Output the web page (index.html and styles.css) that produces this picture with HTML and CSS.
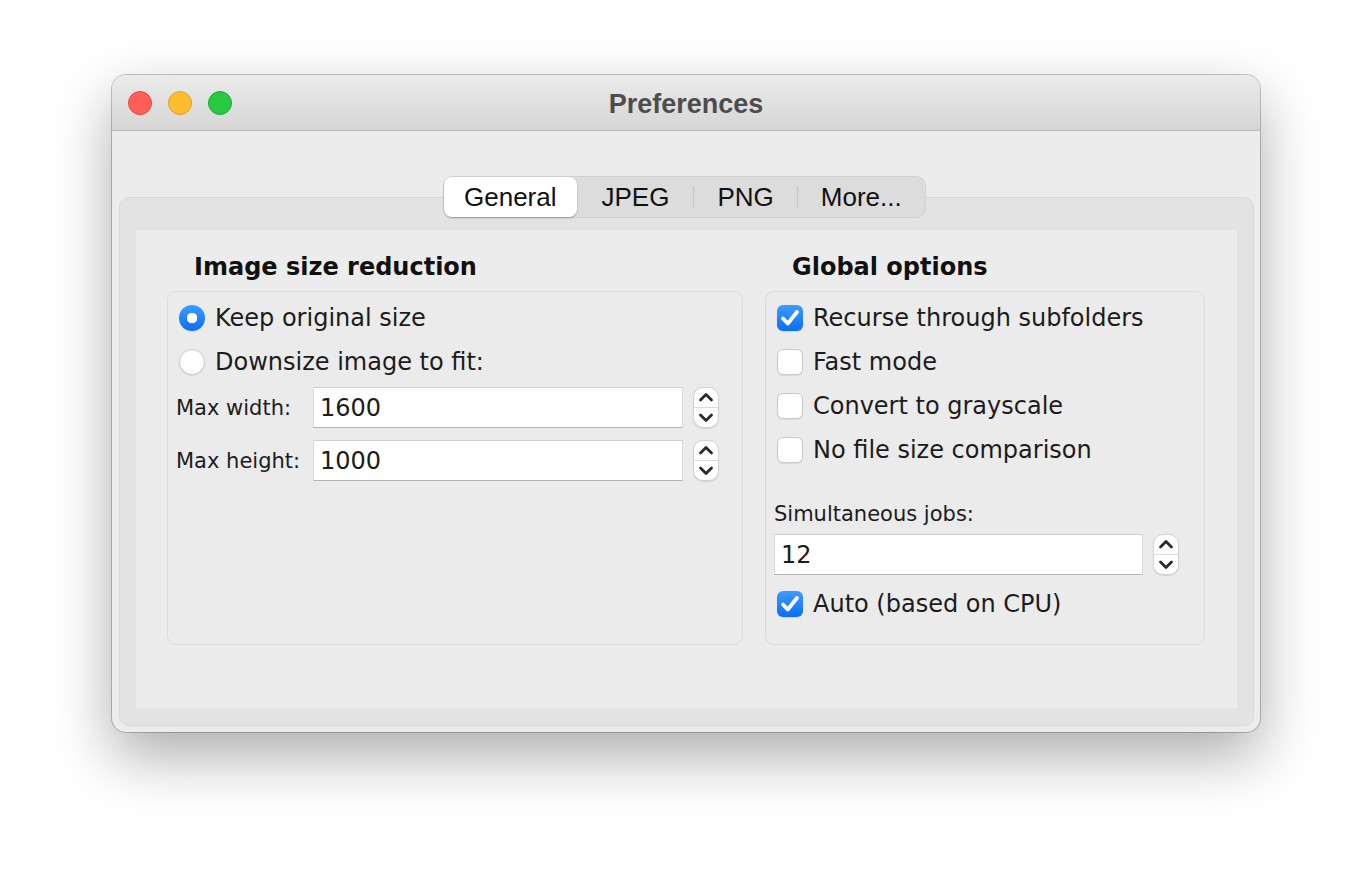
FILE: index.html
```html
<!DOCTYPE html>
<html lang="en">
<head>
    <meta charset="UTF-8">
    <title>Preferences</title>
    <link rel="stylesheet" href="styles.css">
</head>
<body>
    <div class="window">
        <div class="titlebar">
            <div class="lights">
                <span class="light close"></span>
                <span class="light minimize"></span>
                <span class="light zoom"></span>
            </div>
            <div class="title">Preferences</div>
            <div></div>
        </div>

        <div class="content">
            <div class="tabs">
                <div class="tab selected">General</div>
                <div class="tab jpeg">JPEG</div>
                <span class="tab-sep"></span>
                <div class="tab">PNG</div>
                <span class="tab-sep"></span>
                <div class="tab">More...</div>
            </div>

            <div class="pane">
                <div class="panel">
                    <div class="column left">
                        <div class="group-title">Image size reduction</div>
                        <div class="group">
                            <div class="option">
                                <span class="radio checked"></span>
                                <span>Keep original size</span>
                            </div>
                            <div class="option">
                                <span class="radio"></span>
                                <span>Downsize image to fit:</span>
                            </div>
                            <div class="field-row first">
                                <span class="small-label">Max width:</span>
                                <div class="text-field wide">1600</div>
                                <div class="spinner">
                                    <svg width="26" height="41" viewBox="0 0 26 41">
                                        <path d="M7.5 13 L13 7.5 L18.5 13" />
                                        <path d="M7.5 28 L13 33.5 L18.5 28" />
                                    </svg>
                                </div>
                            </div>
                            <div class="field-row">
                                <span class="small-label">Max height:</span>
                                <div class="text-field wide">1000</div>
                                <div class="spinner">
                                    <svg width="26" height="41" viewBox="0 0 26 41">
                                        <path d="M7.5 13 L13 7.5 L18.5 13" />
                                        <path d="M7.5 28 L13 33.5 L18.5 28" />
                                    </svg>
                                </div>
                            </div>
                        </div>
                    </div>

                    <div class="column right">
                        <div class="group-title">Global options</div>
                        <div class="group">
                            <div class="option">
                                <span class="checkbox checked">
                                    <svg width="26" height="26" viewBox="0 0 26 26"><path d="M6 13.5 L10.8 18.5 L20 7" /></svg>
                                </span>
                                <span>Recurse through subfolders</span>
                            </div>
                            <div class="option">
                                <span class="checkbox"></span>
                                <span>Fast mode</span>
                            </div>
                            <div class="option">
                                <span class="checkbox"></span>
                                <span>Convert to grayscale</span>
                            </div>
                            <div class="option">
                                <span class="checkbox"></span>
                                <span>No file size comparison</span>
                            </div>

                            <div class="small-label jobs-label">Simultaneous jobs:</div>
                            <div class="field-row jobs">
                                <div class="text-field">12</div>
                                <div class="spinner">
                                    <svg width="26" height="41" viewBox="0 0 26 41">
                                        <path d="M7.5 13 L13 7.5 L18.5 13" />
                                        <path d="M7.5 28 L13 33.5 L18.5 28" />
                                    </svg>
                                </div>
                            </div>
                            <div class="option auto">
                                <span class="checkbox checked">
                                    <svg width="26" height="26" viewBox="0 0 26 26"><path d="M6 13.5 L10.8 18.5 L20 7" /></svg>
                                </span>
                                <span>Auto (based on CPU)</span>
                            </div>
                        </div>
                    </div>
                </div>
            </div>
        </div>
    </div>
</body>
</html>
```

FILE: styles.css
```css
html {
    background-color: #ffffff;
}
body {
    margin: 0;
    padding: 75px 0 148px 112px;
    min-height: 880px;
    box-sizing: border-box;
    background-color: #ffffff;
    font-family: "DejaVu Sans", "Liberation Sans", sans-serif;
    color: #1c1c1c;
}
.window {
    width: 1148px;
    background-color: #ececec;
    border-radius: 14px;
    overflow: hidden;
    box-shadow: 0 0 0 1px rgba(0, 0, 0, 0.22), 0 24px 60px rgba(0, 0, 0, 0.33);
}
.titlebar {
    display: grid;
    grid-template-columns: 1fr auto 1fr;
    align-items: center;
    height: 55px;
    background: linear-gradient(#ebebeb, #d6d6d6);
    border-bottom: 1px solid #b9b9b9;
}
.lights {
    display: flex;
    gap: 16px;
    padding-left: 16px;
}
.light {
    width: 22px;
    height: 22px;
    border-radius: 50%;
}
.light.close {
    background-color: #ff5f57;
    border: 1px solid #e2463f;
}
.light.minimize {
    background-color: #febc2e;
    border: 1px solid #e0a126;
}
.light.zoom {
    background-color: #28c840;
    border: 1px solid #1aab2f;
}
.title {
    padding-top: 3px;
    font-family: "Liberation Sans", Arial, sans-serif;
    font-weight: bold;
    font-size: 27px;
    color: #4d4d4d;
}
.content {
    padding: 45px 6px 6px 7px;
}
.tabs {
    position: relative;
    z-index: 1;
    display: flex;
    align-items: center;
    width: fit-content;
    height: 42px;
    box-sizing: border-box;
    margin: 0 auto 0 324px;
    background-color: #dcdcdc;
    border: 1px solid #d0d0d0;
    border-radius: 10px;
    font-family: "Liberation Sans", Arial, sans-serif;
    font-size: 26px;
    color: #111;
}
.tab {
    padding: 0 23px;
    line-height: 40px;
}
.tab.jpeg {
    padding: 0 24px 0 25px;
}
.tab.selected {
    padding: 0 20px;
    height: 40px;
    background-color: #ffffff;
    border-radius: 8px;
    box-shadow: 0 1px 2px rgba(0, 0, 0, 0.3);
}
.tab-sep {
    width: 1px;
    height: 22px;
    background-color: #c4c4c4;
}
.pane {
    margin-top: -21px;
    padding: 32px 16px 17px 16px;
    background-color: #e3e3e3;
    border: 1px solid #d8d8d8;
    border-radius: 10px;
}
.panel {
    display: flex;
    gap: 22px;
    height: 478px;
    box-sizing: border-box;
    padding: 22px 31px 0 31px;
    background-color: #ececec;
}
.column.left {
    width: 576px;
}
.column.right {
    width: 440px;
}
.group-title {
    padding-left: 27px;
    height: 30px;
    line-height: 30px;
    margin-bottom: 9px;
    font-weight: bold;
    font-size: 24px;
    color: #111;
}
.group {
    height: 354px;
    box-sizing: border-box;
    padding: 4px 8px 0 8px;
    background-color: #ebebeb;
    border: 1px solid #dcdcdc;
    border-radius: 9px;
}
.option {
    display: flex;
    align-items: center;
    gap: 10px;
    height: 44px;
    padding-left: 3px;
    font-size: 24px;
}
.radio {
    width: 26px;
    height: 26px;
    box-sizing: border-box;
    border-radius: 50%;
    background-color: #ffffff;
    border: 1px solid #c9c9c9;
    box-shadow: 0 1px 1px rgba(0, 0, 0, 0.08);
}
.radio.checked {
    border: none;
    background: radial-gradient(circle, #ffffff 0, #ffffff 5px, transparent 5.5px),
        linear-gradient(#3d9bff, #0a6ff2);
}
.checkbox {
    display: flex;
    width: 26px;
    height: 26px;
    box-sizing: border-box;
    border-radius: 6px;
    background-color: #ffffff;
    border: 1px solid #c9c9c9;
    box-shadow: 0 1px 1px rgba(0, 0, 0, 0.08);
}
.checkbox.checked {
    border: none;
    background: linear-gradient(#3d9bff, #0a6ff2);
}
.checkbox svg path {
    fill: none;
    stroke: #ffffff;
    stroke-width: 3.8;
    stroke-linecap: round;
    stroke-linejoin: round;
}
.field-row {
    display: flex;
    align-items: center;
    gap: 10px;
    margin-top: 12px;
}
.field-row.first {
    margin-top: 3px;
}
.small-label {
    width: 127px;
    font-size: 21px;
}
.text-field {
    width: 369px;
    height: 41px;
    box-sizing: border-box;
    padding-left: 6px;
    line-height: 40px;
    font-size: 24px;
    background-color: #ffffff;
    border: 1px solid #dadada;
    border-bottom-color: #b4b4b4;
    border-top-color: #cfcfcf;
}
.text-field.wide {
    width: 370px;
}
.spinner {
    display: flex;
    position: relative;
    width: 26px;
    height: 41px;
    box-sizing: border-box;
    background-color: #ffffff;
    border: 1px solid #d2d2d2;
    border-radius: 10px;
    box-shadow: 0 1px 1px rgba(0, 0, 0, 0.1);
}
.spinner svg {
    margin: -1px;
}
.spinner::after {
    content: "";
    position: absolute;
    left: 0;
    right: 0;
    top: 19px;
    height: 1px;
    background-color: #dcdcdc;
}
.spinner svg path {
    fill: none;
    stroke: #2a2a2a;
    stroke-width: 2.8;
    stroke-linecap: round;
    stroke-linejoin: round;
}
.jobs-label {
    width: auto;
    margin-top: 29px;
    line-height: 26px;
}
.field-row.jobs {
    margin-top: 7px;
}
.option.auto {
    margin-top: 7px;
}
```
